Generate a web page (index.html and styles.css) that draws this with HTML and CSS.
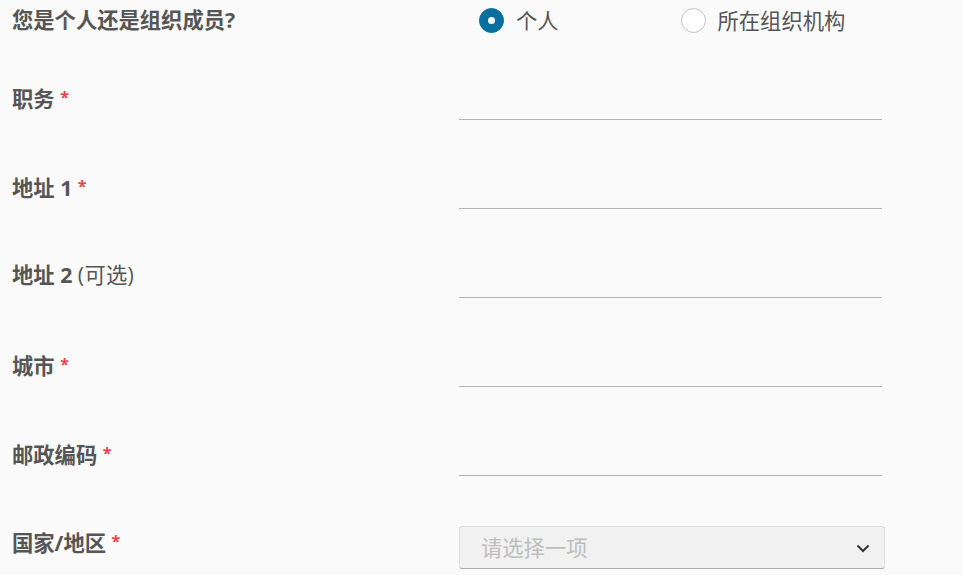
FILE: index.html
```html
<!DOCTYPE html>
<html lang="zh-CN">
<head>
<meta charset="utf-8">
<title>表单</title>
<link rel="stylesheet" href="styles.css">
</head>
<body>
<form class="form">
  <div class="row row-radio">
    <div class="label">您是个人还是组织成员?</div>
    <div class="radios">
      <label class="radio"><span class="dot checked"></span><span class="radio-text">个人</span></label>
      <label class="radio radio-second"><span class="dot"></span><span class="radio-text">所在组织机构</span></label>
    </div>
  </div>
  <div class="row">
    <div class="label">职务 <span class="req">*</span></div>
    <div class="input"></div>
  </div>
  <div class="row">
    <div class="label">地址 1 <span class="req">*</span></div>
    <div class="input"></div>
  </div>
  <div class="row">
    <div class="label">地址 2 <span class="opt">(可选)</span></div>
    <div class="input"></div>
  </div>
  <div class="row">
    <div class="label">城市 <span class="req">*</span></div>
    <div class="input"></div>
  </div>
  <div class="row">
    <div class="label">邮政编码 <span class="req">*</span></div>
    <div class="input"></div>
  </div>
  <div class="row row-select">
    <div class="label">国家/地区 <span class="req">*</span></div>
    <div class="select">
      <span class="placeholder">请选择一项</span>
      <svg class="chev" width="14" height="9" viewBox="0 0 14 9"><path d="M1.5 1.5 L7 7 L12.5 1.5" fill="none" stroke="#333" stroke-width="2"/></svg>
    </div>
  </div>
</form>
</body>
</html>
```
FILE: styles.css
```css
html, body {
  margin: 0;
  padding: 0;
  background: #fafafa;
}
body {
  font-family: "Open Sans", "Noto Sans CJK SC", sans-serif;
  color: #555;
  overflow: hidden;
}
.form {
  padding-left: 12px;
}
.row {
  display: grid;
  grid-template-columns: 447px 423px;
  height: 89px;
  align-items: end;
}
.label {
  font-size: 21.3px;
  font-weight: 700;
  color: #555;
  height: 42px;
  line-height: 42px;
  margin-bottom: 2px;
  white-space: nowrap;
}
.req {
  color: #ee3f48;
  font-size: 16px;
  font-weight: 700;
  vertical-align: 4px;
}
.opt {
  font-weight: 400;
  letter-spacing: 0.3px;
}
.input {
  height: 42px;
  border-bottom: 1px solid #b3b3b3;
  box-sizing: border-box;
}
.row-radio {
  height: 31px;
  align-items: center;
}
.row-radio .label {
  height: 31px;
  line-height: 22px;
  padding-top: 8px;
  margin-bottom: 0;
  box-sizing: border-box;
}
.radios {
  display: flex;
  align-items: center;
  padding-top: 8px;
  padding-left: 20px;
}
.radio {
  display: flex;
  align-items: center;
  gap: 12px;
  width: 202px;
}
.dot {
  width: 25px;
  height: 25px;
  box-sizing: border-box;
  border: 1px solid #c4c4c4;
  border-radius: 50%;
  background: #fff;
  position: relative;
  flex: none;
}
.dot.checked {
  background: #08709f;
  border-color: #08709f;
}
.dot.checked::after {
  content: "";
  position: absolute;
  left: 50%;
  top: 50%;
  width: 7px;
  height: 7px;
  margin: -3.5px 0 0 -3.5px;
  border-radius: 50%;
  background: #fff;
}
.radio-text {
  font-size: 21.3px;
  color: #555;
  line-height: 22px;
}
.row-select {
  height: 93px;
}
.row-select .label {
  margin-bottom: 7px;
}
.select {
  width: 426px;
  height: 43px;
  box-sizing: border-box;
  background: #f1f1f1;
  border: 1px solid #dedede;
  border-bottom: 1px solid #ababab;
  border-radius: 3px;
  display: flex;
  align-items: center;
  justify-content: space-between;
  padding: 0 14px 0 21px;
}
.placeholder {
  font-size: 21.3px;
  color: #bdbdbd;
  margin-top: -2px;
}
.chev {
  margin-top: 2px;
}
```
